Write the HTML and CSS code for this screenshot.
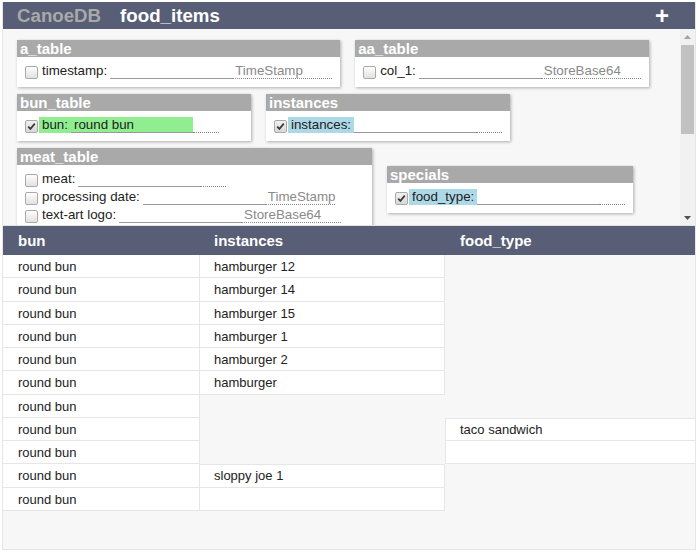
FILE: index.html
```html
<!DOCTYPE html>
<html>
<head>
<meta charset="utf-8">
<title>CanoeDB - food_items</title>
<link rel="stylesheet" href="styles.css">
</head>
<body>
<div class="app">
  <header class="topbar">
    <span class="brand">CanoeDB</span>
    <span class="title">food_items</span>
    <span class="add">+</span>
  </header>

  <div class="picker">
    <section class="tables">
      <div class="panel">
        <div class="panel-head">a_table</div>
        <div class="panel-body">
          <div class="field"><span class="cb"></span><span class="name">timestamp:</span><input class="val" type="text"><span class="type type-l">TimeStamp</span></div>
        </div>
      </div>
      <div class="panel">
        <div class="panel-head">aa_table</div>
        <div class="panel-body">
          <div class="field"><span class="cb"></span><span class="name">col_1:</span><input class="val" type="text"><span class="type type-l">StoreBase64</span></div>
        </div>
      </div>
      <div class="panel">
        <div class="panel-head">bun_table</div>
        <div class="panel-body">
          <div class="field"><span class="cb on"><svg viewBox="0 0 11 11"><path d="M2.2 5.6 L4.4 7.9 L8.8 2.6"/></svg></span><span class="name hl-green">bun:</span><input class="val hl-green" type="text" value="round bun"><span class="type"></span></div>
        </div>
      </div>
      <div class="panel">
        <div class="panel-head">instances</div>
        <div class="panel-body">
          <div class="field"><span class="cb on"><svg viewBox="0 0 11 11"><path d="M2.2 5.6 L4.4 7.9 L8.8 2.6"/></svg></span><span class="name hl-blue">instances:</span><input class="val" type="text"><span class="type"></span></div>
        </div>
      </div>
      <div class="panel panel-meat">
        <div class="panel-head">meat_table</div>
        <div class="panel-body">
          <div class="field"><span class="cb"></span><span class="name">meat:</span><input class="val" type="text"><span class="type"></span></div>
          <div class="field"><span class="cb"></span><span class="name">processing date:</span><input class="val" type="text"><span class="type type-m">TimeStamp</span></div>
          <div class="field"><span class="cb"></span><span class="name">text-art logo:</span><input class="val" type="text"><span class="type type-l">StoreBase64</span></div>
        </div>
      </div>
      <div class="panel">
        <div class="panel-head">specials</div>
        <div class="panel-body">
          <div class="field"><span class="cb on"><svg viewBox="0 0 11 11"><path d="M2.2 5.6 L4.4 7.9 L8.8 2.6"/></svg></span><span class="name hl-blue">food_type:</span><input class="val" type="text"><span class="type"></span></div>
        </div>
      </div>
    </section>
    <div class="vscroll" aria-hidden="true">
      <div class="arrow"><svg viewBox="0 0 7 4" class="up"><path d="M0 4 L3.5 0 L7 4 Z"/></svg></div>
      <div class="track"><div class="thumb"></div></div>
      <div class="arrow"><svg viewBox="0 0 7 4" class="down"><path d="M0 0 L7 0 L3.5 4 Z"/></svg></div>
    </div>
  </div>

  <div class="grid">
    <div class="th">bun</div><div class="th mid">instances</div><div class="th">food_type</div>

    <div class="td c1">round bun</div><div class="td c2">hamburger 12</div><div></div>
    <div class="td c1">round bun</div><div class="td c2">hamburger 14</div><div></div>
    <div class="td c1">round bun</div><div class="td c2">hamburger 15</div><div></div>
    <div class="td c1">round bun</div><div class="td c2">hamburger 1</div><div></div>
    <div class="td c1">round bun</div><div class="td c2">hamburger 2</div><div></div>
    <div class="td c1">round bun</div><div class="td c2">hamburger</div><div></div>
    <div class="td c1">round bun</div><div></div><div></div>
    <div class="td c1">round bun</div><div></div><div class="td c3 top">taco sandwich</div>
    <div class="td c1">round bun</div><div></div><div class="td c3"></div>
    <div class="td c1">round bun</div><div class="td c2 top">sloppy joe 1</div><div></div>
    <div class="td c1">round bun</div><div class="td c2"></div><div></div>
  </div>
</div>
</body>
</html>
```

FILE: styles.css
```css
html, body {
  background: #fff;
}

body {
  margin: 2px 2px 0;
  font-family: "Liberation Sans", Arial, sans-serif;
}

.app {
  height: 548px;
  box-sizing: border-box;
  border: 1px solid #e6e6e6;
  border-top: 0;
  background: #f7f7f7;
  display: flex;
  flex-direction: column;
  overflow: hidden;
}

/* top bar */
.topbar {
  flex: none;
  height: 27px;
  background: #575e75;
  display: flex;
  align-items: center;
  padding-left: 14px;
  white-space: nowrap;
}

.brand,
.title {
  font-size: 18.7px;
  font-weight: bold;
  line-height: 27px;
}

.brand {
  color: #a9a9a9;
}

.title {
  color: #fff;
  margin-left: 19px;
}

.add {
  margin-left: auto;
  margin-right: 26px;
  color: #fff;
  font-size: 24px;
  font-weight: bold;
  line-height: 27px;
}

/* table selector panels */
.picker {
  flex: none;
  height: 196px;
  display: flex;
  border-bottom: 1px solid #e2e2e2;
}

.tables {
  flex: 1;
  min-width: 0;
  overflow: hidden;
  box-sizing: border-box;
  padding: 11px 0 0 14px;
  display: flex;
  flex-wrap: wrap;
  align-items: center;
  align-content: flex-start;
  gap: 7px 15px;
}

.vscroll {
  flex: none;
  width: 15px;
  background: #f1f1f1;
  display: flex;
  flex-direction: column;
}

.arrow {
  height: 15px;
  display: flex;
  align-items: center;
  justify-content: center;
}

.arrow svg {
  width: 7px;
  height: 4px;
}

.arrow .up {
  fill: #a3a3a3;
}

.arrow .down {
  fill: #505050;
}

.track {
  flex: 1;
  padding: 1px 1px 0;
}

.thumb {
  height: 89px;
  background: #c1c1c1;
}

.panel {
  min-width: 234px;
  box-sizing: border-box;
  background: #fff;
  box-shadow: 1px 1px 3px rgba(0, 0, 0, 0.3);
}

.panel-meat {
  width: 355px;
}

.panel-head {
  height: 17px;
  line-height: 17px;
  padding-left: 3px;
  background: #a9a9a9;
  color: #fff;
  font-size: 15px;
  font-weight: bold;
}

.panel-body {
  padding: 4px 8px 8px;
}

.field {
  display: flex;
  align-items: flex-end;
  height: 18px;
  font-size: 13.33px;
  color: #222;
  white-space: nowrap;
}

.cb {
  flex: none;
  width: 13px;
  height: 13px;
  box-sizing: border-box;
  margin-right: 1px;
  border: 1px solid #a9a9a9;
  border-radius: 2px;
  background: linear-gradient(#fdfdfd, #e2e2e2);
  display: flex;
}

.cb svg {
  width: 11px;
  height: 11px;
}

.cb svg path {
  fill: none;
  stroke: #3a3a3a;
  stroke-width: 1.7;
}

.cb.on {
  background: linear-gradient(#f0f0f0, #d8d8d8);
}

.name {
  padding: 0 3px;
  line-height: 16px;
}

.val {
  width: 122px;
  height: 16px;
  box-sizing: border-box;
  margin: 0;
  padding: 0 3px;
  border: 0;
  border-bottom: 1px solid #999;
  border-radius: 0;
  background: transparent;
  color: #222;
  font: inherit;
  outline: none;
}

.type {
  min-width: 26px;
  box-sizing: border-box;
  padding: 0 3px;
  line-height: 15px;
  border-bottom: 1px dotted #888;
  color: #8a8a8a;
}

.type-l {
  width: 100px;
}

.type-m {
  width: 70px;
}

.hl-green {
  background: #90ee90;
}

.hl-blue {
  background: #add8e6;
}

/* results grid */
.grid {
  display: grid;
  grid-template-columns: 197px 245px 1fr;
  grid-template-rows: 29px;
  grid-auto-rows: 23.25px;
  font-size: 13px;
  color: #222;
  white-space: nowrap;
}

.th {
  background: #575e75;
  color: #fff;
  font-size: 15px;
  font-weight: bold;
  line-height: 29px;
  padding-left: 15px;
}

.th.mid {
  padding-left: 14px;
}

.td {
  box-sizing: border-box;
  background: #fff;
  border-right: 1px solid #e6e6e6;
  border-bottom: 1px solid #e6e6e6;
  padding-top: 1px;
  line-height: 21px;
}

.c1 {
  padding-left: 15px;
}

.c2 {
  padding-left: 14px;
}

.c3 {
  border-left: 1px solid #e6e6e6;
  border-right: 0;
  padding-left: 14px;
}

.top {
  border-top: 1px solid #e6e6e6;
  padding-top: 0;
}
```
